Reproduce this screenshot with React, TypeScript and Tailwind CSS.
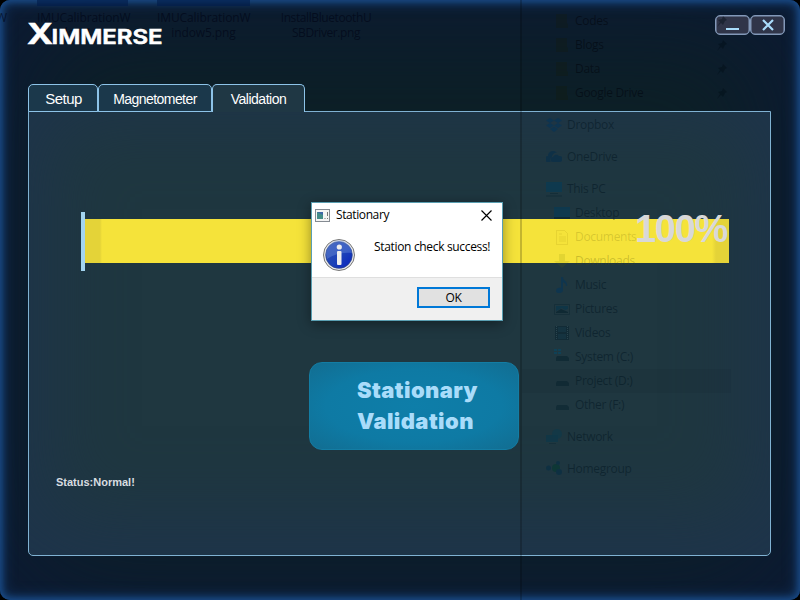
import type { ReactNode } from "react";

type Kind =
  | "folder" | "dropbox" | "cloud" | "pc" | "screen" | "doc" | "down" | "music"
  | "picture" | "video" | "system" | "drive" | "network" | "home";

const glyphs: Record<Kind, ReactNode> = {
  folder: <path d="M2 1h11v9l1 1v4H2z" fill="#181c00" opacity=".4" />,
  dropbox: <path d="M4 1l4 2.5L4 6 0 3.5zM12 1l4 2.5L12 6 8 3.5zM4 6l4 2.5L4 11 0 8.500zM12 6l4 2.500L12 11 8 8.500zM4 12l4-2.500 4 2.500-4 3z" fill="#00345c" />,
  cloud: <path d="M2 13a3 3 0 0 1 0-6 5 5 0 0 1 9-3 4 4 0 0 0-5 4 3 3 0 0 0-1 5zM7 13a2.500 2.500 0 0 1 0-5 3.500 3.500 0 0 1 6-1 3 3 0 0 1 1 6z" fill="#002c4c" />,
  pc: <><path d="M0 1h16v10H0z" fill="#003c5c" /><path d="M4 12h8v1H4zM0 14.500h16v1H0z" fill="#001d28" opacity=".6" /></>,
  screen: <><path d="M0 2h16v11H0z" fill="#003b5c" /><path d="M0 12h16v2H0z" fill="#001c2c" /></>,
  doc: <path d="M2.500 1.500h8l3 3v11h-11zM5 5h3M5 8h7M5 10h7M5 12h7" fill="none" stroke="#8a7400" opacity=".25" />,
  down: <path d="M5 1h6v7h5l-8 7-8-7h5z" fill="#6f7800" opacity=".25" />,
  music: <path d="M7 0h2c0 4 5 4 4 9h-1c0-3-2-3-3-4v8c0 4-7 4-7 1s3-4 5-3z" fill="#00345c" />,
  picture: <><path d="M.5 3.500h15v10H.5z" fill="none" stroke="#001c28" opacity=".5" /><path d="M2 5h12v3l-3 1-3-2-6 3z" fill="#00344c" /><path d="M2 11l5-3 7 3v1H2z" fill="#001c28" /></>,
  video: <><path d="M1 1h14v14H1z" fill="#001c28" opacity=".8" /><path d="M4 2h8v5H4zM4 9h8v5H4z" fill="#0c3040" /><path d="M2.500 1v14M13.500 1v14" stroke="#35535c" strokeDasharray="1 1" /></>,
  system: <><path d="M0 0h3v2H0zM4 0h3v2H4zM0 3h3v2H0zM4 3h3v2H4z" fill="#004c6c" /><path d="M2 9l1-2h10l2 2v3H2z" fill="#001c28" opacity=".85" /></>,
  drive: <path d="M2 10l1-2h10l2 2v3H2z" fill="#001c28" opacity=".75" />,
  network: <><circle cx="11" cy="5" r="5" fill="#003c54" opacity=".7" /><path d="M0 6h12v7H0z" fill="#003850" opacity=".8" /><path d="M3 14h7v1H3z" fill="#001c28" opacity=".5" /></>,
  home: <><circle cx="2.500" cy="7" r="2.500" fill="#002c44" /><circle cx="10" cy="7" r="4" fill="#00382c" /><circle cx="12" cy="2" r="2" fill="#002c44" /><circle cx="13" cy="11" r="3" fill="#002c44" /></>,
};

const pinnedFolders = ["Codes", "Blogs", "Data", "Google Drive"];

const drives: { kind: Kind; label: string; tone?: string }[] = [
  { kind: "screen", label: "Desktop" },
  { kind: "doc", label: "Documents", tone: "text-[#5a5200]/20" },
  { kind: "down", label: "Downloads", tone: "text-[#4a4a00]/25" },
  { kind: "music", label: "Music" },
  { kind: "picture", label: "Pictures" },
  { kind: "video", label: "Videos" },
  { kind: "system", label: "System (C:)" },
  { kind: "drive", label: "Project (D:)" },
  { kind: "drive", label: "Other (F:)" },
];

type RowProps = { kind: Kind; label: string; indent?: boolean; pinned?: boolean; tone?: string };

function Row({ kind, label, indent, pinned, tone = "text-[#001420]/50" }: RowProps) {
  return (
    <div className={`flex h-6 items-center gap-[5px] ${indent ? "pl-8" : "pl-6"} ${label.startsWith("Project") ? "bg-black/4" : ""}`}>
      <svg className="h-4 w-4 shrink-0 opacity-50" viewBox="0 0 16 16">{glyphs[kind]}</svg>
      <span className={`text-[12px] leading-4 tracking-[-0.3px] ${tone}`}>{label}</span>
      {pinned && (
        <svg className="mr-[3px] ml-auto h-3 w-3 opacity-40" viewBox="0 0 12 12">
          <path d="M7 1l4 4-2 1-2 4-2-2-4 4 3-5-2-2 4-1z" fill="#000c14" />
        </svg>
      )}
    </div>
  );
}

function Explorer() {
  return (
    <div className="pointer-events-none absolute inset-0 overflow-hidden font-['Open_Sans',sans-serif]">
      <div className="absolute top-0 left-0 flex items-start text-center text-[12px] leading-[15px] tracking-[-0.1px] text-[#000516]/65">
        <div className="w-[37px] pt-[10px] text-left"><span className="-ml-1">W</span></div>
        <div className="w-[91px] whitespace-nowrap"><div className="h-[6px] bg-[#001b4a]/60" /><div className="pt-1">IMUCalibrationW<br />indow4.png</div></div>
        <div className="ml-[29px] w-[93px] whitespace-nowrap"><div className="h-[6px] bg-[#001b4a]/60" /><div className="pt-1">IMUCalibrationW<br />indow5.png</div></div>
        <div className="ml-[28px] w-[96px] pt-[10px] tracking-[-0.4px]">InstallBluetoothU<br />SBDriver.png</div>
      </div>
      <div className="absolute top-0 left-[520px] flex h-[600px] w-[211px] flex-col gap-2 border-l-2 border-black/20 pt-[9px]">
        <div>
          {pinnedFolders.map((l) => <Row key={l} kind="folder" label={l} indent pinned tone="text-[#00040c]/55" />)}
        </div>
        <Row kind="dropbox" label="Dropbox" />
        <Row kind="cloud" label="OneDrive" />
        <div>
          <Row kind="pc" label="This PC" />
          {drives.map((d) => <Row key={d.label} {...d} indent />)}
        </div>
        <Row kind="network" label="Network" />
        <Row kind="home" label="Homegroup" />
      </div>
    </div>
  );
}

function Dialog() {
  return (
    <div className="absolute top-[202px] left-[311px] flex h-[119px] w-[192px] flex-col border border-[#5a9fb2] bg-white font-['Open_Sans',sans-serif] text-[12px] text-black shadow-[0_3px_12px_rgba(0,0,0,0.4)]">
      <div className="flex h-[25px] shrink-0 items-center pl-[3px]">
        <svg className="h-[13px] w-[15px]" viewBox="0 0 15 13">
          <rect x=".5" y=".5" width="14" height="12" fill="#f4f4f4" stroke="#858b92" />
          <rect x="2" y="3" width="6" height="7" fill="#438c88" /><path d="M2 3h6v3z" fill="#3d66a8" />
          <path d="M9.500 9.500h1M12.500 3v4M12 9.500h1" stroke="#777" />
        </svg>
        <span className="-mt-px ml-[6px] tracking-[-0.4px]">Stationary</span>
        <svg className="mr-[10px] ml-auto h-[11px] w-[11px]" viewBox="0 0 11 11"><path d="M.5.5l10 10M10.500.5l-10 10" stroke="#000" strokeWidth="1.150" /></svg>
      </div>
      <div className="flex grow">
        <svg className="mt-[11px] ml-[11px] h-8 w-8 shrink-0" viewBox="0 0 32 32">
          <defs><linearGradient id="blue" x2="1" y2="1"><stop stopColor="#2f50ae" /><stop offset=".55" stopColor="#1c42b8" /><stop offset="1" stopColor="#0720c0" /></linearGradient></defs>
          <circle cx="16" cy="16" r="15.500" fill="#e8e8e8" stroke="#777" />
          <circle cx="16" cy="16" r="13.300" fill="url(#blue)" stroke="#2b4486" strokeWidth=".7" />
          <path d="M3 15a13 13 0 0 1 26-1c-8-1-18 1-25 6z" fill="#6f91db" opacity=".4" />
          <circle cx="16.300" cy="8" r="2.600" fill="#eee" />
          <rect x="14" y="12" width="4.500" height="14" rx="1" fill="#eee" />
        </svg>
        <div className="mt-[10px] ml-[19px] whitespace-nowrap tracking-[-0.33px]">Station check success!</div>
      </div>
      <div className="flex h-[43px] shrink-0 items-start justify-end border-t border-[#dfdfdf] bg-[#f0f0f0] pt-[9px] pr-3">
        <button className="flex h-[21px] w-[73px] items-center justify-center border-2 border-[#0078d7] bg-[#e1e1e1] tracking-[-0.3px]">OK</button>
      </div>
    </div>
  );
}

function Logo() {
  return (
    <svg className="h-[24px] w-[136px] overflow-visible" viewBox="0 0 136 24" fill="#fff" stroke="#fff" fontFamily="Inter, sans-serif">
      <text x="-1" y="22" fontSize="29" fontWeight="700" textLength="26" lengthAdjust="spacingAndGlyphs" strokeWidth=".5">X</text>
      <text x="23.500" y="22" fontSize="20.500" fontWeight="600" textLength="111" lengthAdjust="spacingAndGlyphs" strokeWidth=".6">IMMERSE</text>
    </svg>
  );
}

export default function App() {
  return (
    <div className="h-[600px] w-[800px] overflow-hidden bg-black font-['Liberation_Sans',Arial,sans-serif]">
      <div className="relative flex h-full w-full flex-col rounded-[10px] bg-[#0d2026] px-7 shadow-[inset_0_0_6px_2px_#1a4b88,inset_0_0_14px_3px_#123765,inset_0_0_110px_35px_#0c1a33]">
        <header className="flex h-[84px] shrink-0 justify-between">
          <div className="relative z-10 pt-[22px]"><Logo /></div>
          <div className="-mr-[13px] flex pt-[15px]">
            <button className="flex h-5 w-[35px] justify-center rounded-[5px] border border-[#8298b8] bg-[#303549] shadow-[inset_0_0_0_0.5px_#8298b8]">
              <span className="mt-[12px] h-[2px] w-[13px] bg-[#a9dcfa]" />
            </button>
            <button className="flex h-5 w-[35px] items-center justify-center rounded-[5px] border border-[#8298b8] bg-[#303549] shadow-[inset_0_0_0_0.5px_#8298b8]">
              <svg className="h-[12px] w-[12px]" viewBox="0 0 12 12"><path d="M1 1l10 10M11 1l-10 10" stroke="#a9dcfa" strokeWidth="2.200" /></svg>
            </button>
          </div>
        </header>
        <nav className="z-10 flex h-7 shrink-0 text-white">
          <button className="w-[70px] rounded-t-[5px] border border-[#8dc3e8] bg-[#1b384b] pt-0.5 pl-px text-[15px] tracking-[-0.5px]">Setup</button>
          <button className="w-[114px] rounded-t-[5px] border border-[#8dc3e8] bg-[#1b384b] pt-0.5 text-[14px] tracking-[-0.56px]">Magnetometer</button>
          <button className="w-[93px] rounded-t-[5px] border border-b-0 border-[#8dc3e8] bg-[#1f3744] pt-0.5 text-[14px] tracking-[-0.5px]">Validation</button>
        </nav>
        <main className="-mt-px flex h-[445px] w-[743px] flex-col rounded-b-[5px] border border-[#80b2d3] bg-[#1f3740] shadow-[inset_0_-16px_80px_18px_#1e344b]">
          <section className="mt-[100px] ml-[52px] flex h-[59px] w-[648px] items-center">
            <div className="h-[59px] w-1 bg-[#a3d4ef]" />
            <div className="mb-px h-11 grow bg-[linear-gradient(90deg,#e4d338_0,#e4d338_15px,#f5e33a_17px,#f5e33a_calc(100%-17px),#e4d338_calc(100%-13px))]" />
          </section>
          <button className="mt-[91px] ml-[280px] flex h-[88px] w-[210px] items-center rounded-[13px] border border-[#137da4] bg-[radial-gradient(ellipse_at_center,#0e7ea9_0%,#0e7aa4_60%,#126d91_100%)] pl-[47px] text-left font-['Inter',sans-serif] text-[22px] leading-[31px] font-black text-[#a9dcfa]">
            <span className="tracking-[0.4px]">Stationary<br />Validation</span>
          </button>
          <p className="mt-[24px] ml-[27px] text-[11px] leading-4 font-bold text-[#d8dde0]">Status:Normal!</p>
        </main>
        <Explorer />
        <div className="absolute top-[207px] right-[73px] text-[38px] leading-[44px] font-bold tracking-[-1.3px] text-[#d8d8d8]">100%</div>
        <Dialog />
      </div>
    </div>
  );
}
